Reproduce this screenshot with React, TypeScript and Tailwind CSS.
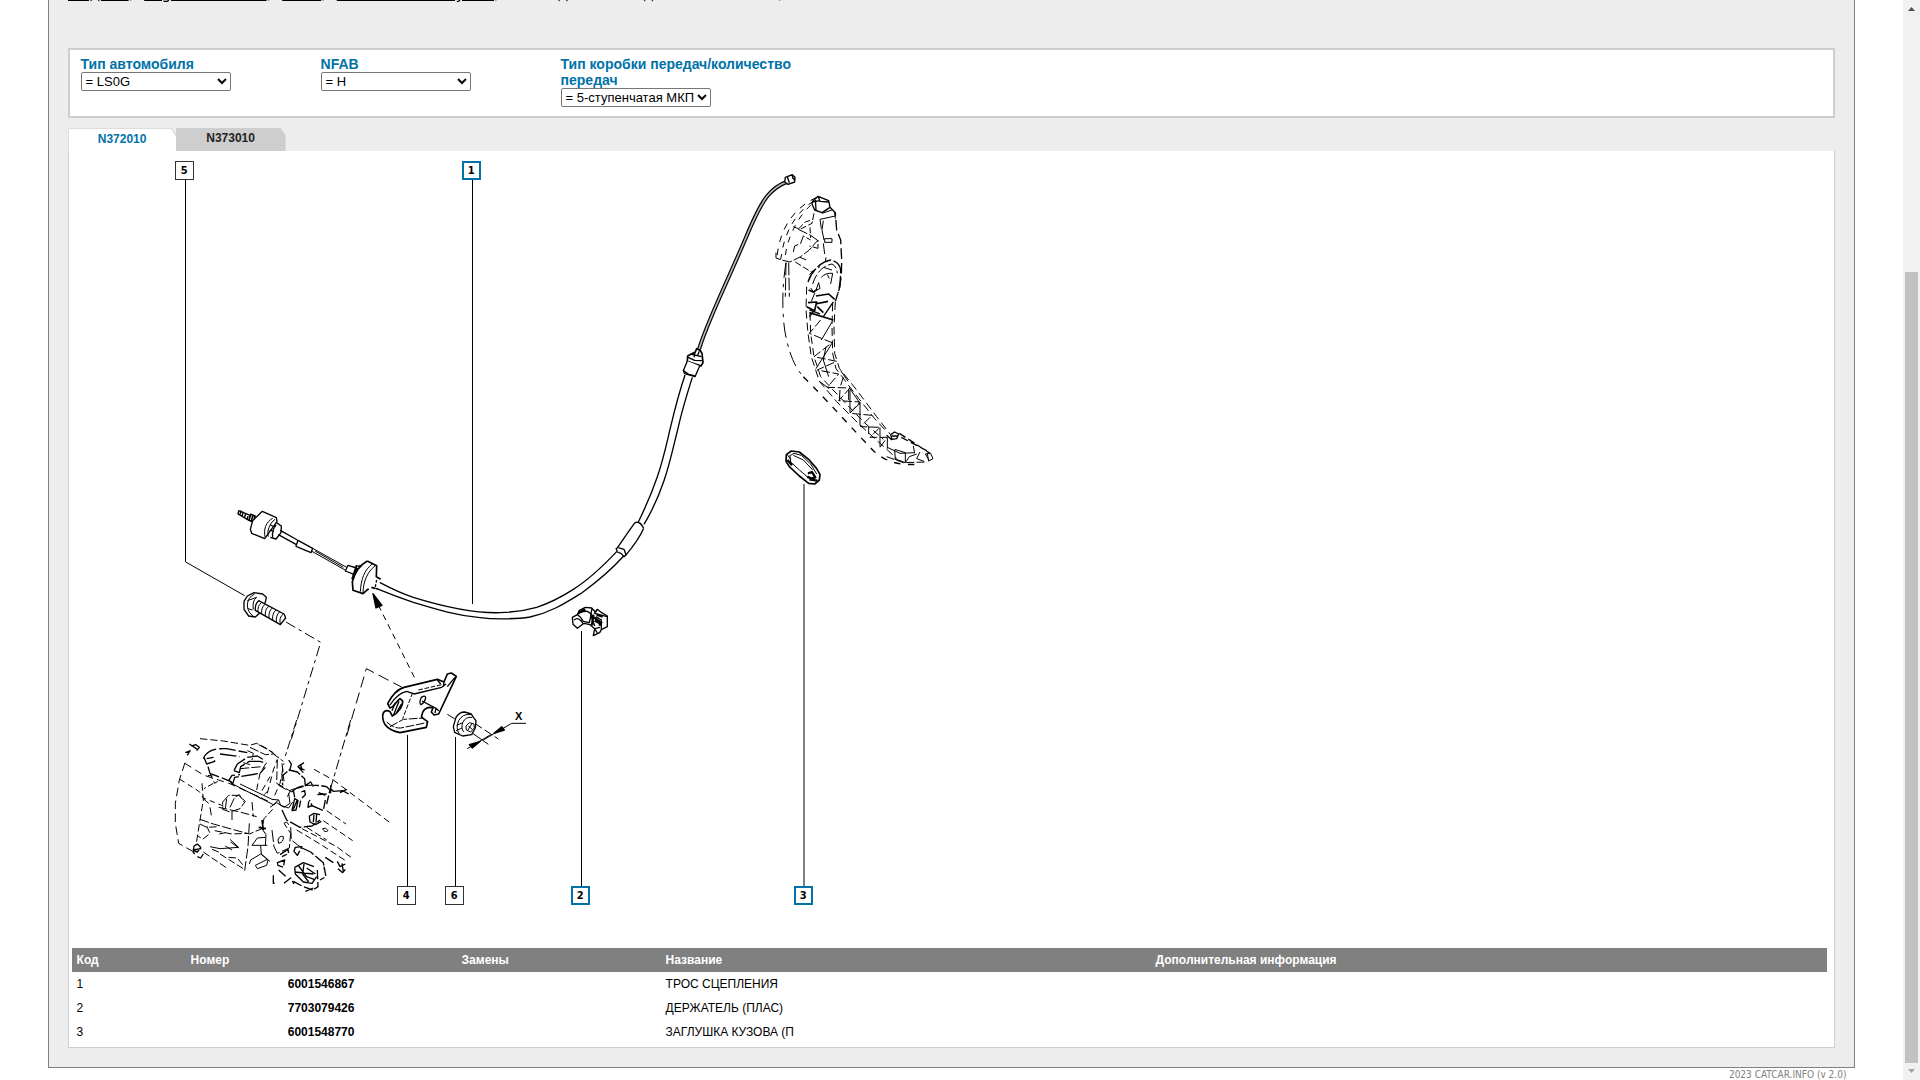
import { useState } from 'react';

const TRAIL = ['Модели', 'Logan - Sandero', 'LS0G', 'Механические узлы'];

const FILTERS = [
  { id: 'type', label: 'Тип автомобиля', value: '= LS0G' },
  { id: 'nfab', label: 'NFAB', value: '= H' },
  {
    id: 'gearbox',
    label: 'Тип коробки передач/количество передач',
    value: '= 5-ступенчатая МКП',
  },
];

const TABS = ['N372010', 'N373010'];

const PARTS = [
  { code: '1', number: '6001546867', name: 'ТРОС СЦЕПЛЕНИЯ' },
  { code: '2', number: '7703079426', name: 'ДЕРЖАТЕЛЬ (ПЛАС)' },
  { code: '3', number: '6001548770', name: 'ЗАГЛУШКА КУЗОВА (П' },
];

// Callouts sit on the diagram canvas, active ones are listed in the table
const CALLOUTS = [
  { n: '5', active: false, pos: 'left-[106px] top-[10px]' },
  { n: '1', active: true, pos: 'left-[393px] top-[10px]' },
  { n: '4', active: false, pos: 'left-[328px] top-[735px]' },
  { n: '6', active: false, pos: 'left-[376px] top-[735px]' },
  { n: '2', active: true, pos: 'left-[502px] top-[735px]' },
  { n: '3', active: true, pos: 'left-[725px] top-[735px]' },
];

function Cable() {
  return (
    <>
      {/* Upper half: thin cable, ferrule, sheath */}
      <g transform="translate(600 160) scale(0.33333)" strokeWidth="4">
        <path
          d="M297 568C310 525 340 455 362 405C400 320 420 275 440 228C460 180 480 135 502 108C520 87 540 73 560 66"
          strokeWidth="12"
        />
        <path
          d="M297 568C310 525 340 455 362 405C400 320 420 275 440 228C460 180 480 135 502 108C520 87 540 73 560 66"
          stroke="#bbb"
          strokeWidth="5"
        />
        <path d="M556 52L577 44L585 52L584 66L564 73L554 66ZM577 44L578 54L584 60M562 50L568 68" fill="#fff" />
        <path d="M274 582L286 576L290 566L300 571L306 580L309 608L303 618L274 612L262 603L263 588Z" fill="#fff" strokeWidth="5" />
        <path d="M264 592L284 601L309 602M272 582L304 590M285 578L282 592M298 574L292 588M264 604L300 616" />
        <path d="M262 603L250 632L254 641L285 650L299 618" fill="#fff" />
        <path d="M250 632L266 643L286 648" />
        <path d="M255 645C240 690 225 745 212 800C200 850 190 900 172 950C155 1000 135 1045 115 1086" />
        <path d="M277 652C260 705 245 755 234 805C220 860 210 910 192 962C174 1014 155 1055 132 1093" />
        <path d="M105 1088C85 1115 65 1145 50 1166M131 1105C118 1135 95 1165 77 1186M105 1088Q120 1082 131 1105" />
      </g>

      {/* Lower half of the sheath */}
      <g transform="translate(500 480) scale(0.33333)" strokeWidth="4">
        <path d="M348 204L352 216L364 221L372 230L378 224L372 208L355 203" />
        <path d="M350 215C300 268 265 300 220 328C175 357 140 372 110 382C75 392 40 397 0 398C-80 400 -170 380 -260 352C-310 335 -340 318 -367 304" />
        <path d="M371 228C335 268 290 306 245 339C190 373 150 398 90 411C50 418 -20 418 -60 413C-140 405 -200 385 -260 367C-310 350 -340 338 -372 325" />
      </g>

      {/* Adjuster end with rubber dampers */}
      <g transform="translate(160 480) scale(0.33333)" strokeWidth="4">
        <path d="M236 92L272 107M236 92L234 102L268 122M243 91L240 104M250 95L246 109M258 99L253 113M266 103L261 118" />
        <path d="M272 103L285 108L281 127L267 121ZM278 108L274 124" strokeWidth="5" />
        <path d="M307 94L349 113L351 125L314 176L275 160L271 148L278 122Z" fill="#fff" />
        <path d="M338 115C318 125 309 150 316 173M345 118C328 130 320 155 325 170" strokeWidth="3" />
        <path d="M348 127L364 138L363 158L348 177L331 172M348 135Q335 150 338 172M331 135L345 141M329 150L342 155" />
        <path d="M361 151L412 180M355 164L408 193M414 181L458 205L453 218L408 199Z" fill="#fff" />
        <path d="M458 205L560 262M456 214L555 270M465 213L550 262" strokeWidth="3" />
        <path d="M564 256L590 264L584 284L556 273Z" fill="#fff" />
        <path d="M592 258L606 260M588 266L602 268M583 276L596 278M577 286L590 290M575 294L590 298M590 255L576 298M601 255L586 300" strokeWidth="5" />
        <path d="M622 243L650 257L649 290L662 298L658 314L634 322L609 341L579 331L577 305C585 275 600 255 622 243Z" fill="#fff" stroke="none" />
        <path d="M622 243L650 257L649 290L662 298M626 326L609 341L579 331L577 305C585 275 600 255 622 243M634 322L645 325" strokeWidth="5" />
        <path d="M638 251C612 270 603 300 601 335M645 258C622 275 610 305 609 338" strokeWidth="3" />
        <path d="M650 300L645 325L658 328" strokeDasharray="8 5" />
      </g>
    </>
  );
}

function Fasteners() {
  return (
    <g transform="translate(160 480) scale(0.33333)" strokeWidth="4">
      {/* Bolt and its axis */}
      <path d="M77 246L254 347" strokeWidth="3" />
      <path d="M262 348L282 338L308 342L319 352L316 366L300 398L286 411L266 408L252 388V364Z" fill="#fff" />
      <path d="M284 342Q262 352 262 378Q264 398 280 408M262 362L290 352M264 386L278 390M290 352Q276 362 280 388" strokeWidth="3" />
      <path d="M296 362L372 402L377 414L361 434L286 391Q284 372 296 362Z" fill="#fff" />
      <path d="M304 368Q292 378 294 396M315 373Q303 383 305 402M326 379Q314 389 316 408M337 384Q325 394 327 414M348 390Q336 400 338 420M359 396Q347 406 349 426M370 402Q356 412 361 432" strokeWidth="3" />
      <path d="M378 426L482 487L394 778" strokeDasharray="32 12 10 12" strokeWidth="3" />

      {/* Assembly axis of the bracket */}
      <path d="M730 624L619 566L560 768" strokeDasharray="34 16" strokeWidth="3" />
      <path d="M763 592L650 365" strokeDasharray="18 14" strokeWidth="3" />
      <path d="M639 341L666 376L648 384Z" fill="#000" />
      <path d="M862 703L890 720M944 730L1015 777" strokeDasharray="26 10" strokeWidth="3" />

      {/* Bracket */}
      <path
        d="M683 671C696 645 712 628 732 622L832 598L852 606L862 582L874 579L889 589L836 702L822 705L814 696L819 684C800 678 786 690 785 712L803 725L799 742L720 758C690 752 668 736 668 708C668 694 678 688 690 695L697 708C713 700 729 680 728 663L720 656C708 664 702 682 690 684Z"
        fill="#fff"
        strokeWidth="5"
      />
      <path d="M690 675C706 650 720 638 740 634L762 642L845 622L858 612M852 606L850 620M862 620L885 592M832 600L842 612" />
      <path d="M758 638L728 716M775 630L845 614" strokeDasharray="14 5" strokeWidth="3" />
      <path d="M690 740L730 718L790 714M680 726Q702 746 722 744L800 728" strokeDasharray="26 5" strokeWidth="3" />
      <path d="M706 668L696 692M717 664L701 704M724 672L710 698" />
      <path d="M784 652Q795 645 797 652Q796 666 783 674Q776 670 784 652Z" strokeWidth="4" />
      <path d="M786 663L828 685L825 699M828 685L836 692" />

      {/* Nut */}
      <path d="M888 712Q898 696 914 696L934 702L940 712L948 722L946 744L935 764L908 768L884 757L880 740Z" fill="#fff" />
      <path d="M932 704Q908 700 896 722Q886 744 898 762M936 712Q916 710 908 728Q902 746 912 756M908 728L890 736M906 744L888 752" strokeWidth="3" />
      <path d="M928 728L942 732L943 744L932 756L919 750L918 738ZM925 738L937 748M935 732L924 750" strokeWidth="3" />

      {/* Dimension X */}
      <path d="M1098 730H1055L970 780M922 806L992 764M938 760L985 793" strokeWidth="3" />
      <path d="M1002 760L1025 740L1033 750ZM961 784L937 804L928 794Z" fill="#000" />
    </g>
  );
}

function Clip() {
  return (
    <g transform="translate(500 480) scale(0.33333)" strokeWidth="4">
      <path d="M217 412L232 404L238 391L256 382L275 384L286 396L292 388L305 398L322 408V440L304 449L299 458L280 467L284 446L270 434L252 430L232 445L219 433Z" fill="#fff" />
      <path d="M232 404Q244 392 262 394L274 402L268 428L250 424L240 410ZM222 420Q236 408 250 432" />
      <path d="M276 386L272 404L284 438M292 388L284 400L306 406L322 410M304 418V448M288 410L304 420M284 446L300 442M284 446L294 462" />
      <path d="M282 412L306 430M284 422L304 432M290 404L308 410M296 434H306M280 404L276 436M236 398L256 388" strokeWidth="7" />
    </g>
  );
}

function Pedal() {
  return (
    <g transform="translate(740 160) scale(0.33333)" strokeWidth="3">
      {/* Pivot bracket */}
      <path d="M218 124L234 109L266 122L270 142L246 158L224 150L216 132ZM234 109L240 124L266 126M226 116L228 150M216 126L240 122M248 156L262 148" strokeWidth="4" />
      <path d="M230 112C170 140 130 190 115 262L110 296" strokeDasharray="20 20" />
      <path d="M220 124C175 152 140 205 128 265L122 298" strokeDasharray="18 20" />
      <path d="M212 136C186 158 155 205 140 262L134 300" strokeDasharray="18 20" />
      <path d="M108 278V294L125 300L150 306L182 290L208 270L234 240V265L208 258M160 276L164 258L182 250L190 228L212 240M175 208L212 226L234 242" strokeDasharray="30 6" />
      <path d="M222 160L216 190L180 208L160 200M176 206L196 186L220 178M210 202L212 234" strokeDasharray="18 7" />
      <path d="M180 292L204 302M166 306L214 336L240 320M222 330L206 346" strokeDasharray="20 7" />
      <path d="M270 142L286 158L290 210L302 240L305 300L304 350L294 400" strokeDasharray="32 12" strokeWidth="4" />
      <path d="M284 156L286 176M240 178L244 206M250 182L246 210L252 240M240 178L286 168M246 160L276 150" />
      <path d="M254 236H276V247H254ZM250 250L254 282M258 292L256 306" />

      {/* Arm head */}
      <path d="M204 366C214 335 240 306 272 300Q300 306 302 332L300 380L286 424" strokeWidth="4" strokeDasharray="46 8" />
      <path d="M218 372C228 340 246 318 276 312Q290 318 292 340" strokeDasharray="30 8" />
      <path d="M244 352Q256 338 278 340L272 372M236 368L228 390L240 386ZM250 322L276 330M262 344L268 356M212 384L224 400L214 424" />
      <path d="M228 408L266 402L284 418M264 424L226 432M206 390L220 396L232 388M204 428L230 426L224 452L200 440M208 458L280 480M232 440L250 458" strokeWidth="5" />
      <path d="M280 426L250 470M208 450L240 462M220 455L208 470" strokeWidth="4" />

      {/* Arm edges */}
      <path d="M200 380L198 450L204 520L214 590L238 664L290 725L360 795L420 850L470 895" strokeDasharray="24 12" />
      <path d="M210 460L212 520L222 590L242 650L300 712L370 785L430 838" strokeDasharray="22 13" />
      <path d="M286 426L282 500L284 580L298 625L350 690L410 770L450 822" strokeDasharray="24 13" />
      <path d="M278 430L276 500L278 580L288 626L344 700L404 776L440 815" strokeDasharray="24 13" />

      {/* Ribs */}
      <path
        d="M242 480L208 520L276 548L222 590L290 604L232 630L296 642L262 682L330 684L296 722L360 726L330 760L396 766L362 800L420 802L390 832L442 832L420 862"
        strokeDasharray="26 8"
      />
      <path d="M276 486L244 540M276 550L228 626M258 560L250 600L266 650M326 686V720M300 690L298 722M330 686L360 730L330 758V690M360 726V796M386 800V822M420 802V860M442 866V834" />
      <path d="M238 664L268 686M302 632L324 664M310 652L302 676" />

      {/* Front contour */}
      <path d="M146 308L148 410M138 308L136 410" strokeDasharray="38 7" />
      <path d="M138 308C126 380 126 450 134 510C144 570 162 620 190 650" strokeDasharray="46 18 10 16" />
      <path d="M190 650C270 730 340 810 400 872C440 908 480 918 545 912" strokeDasharray="20 22" strokeWidth="4" />

      {/* Foot pad */}
      <path d="M452 824L464 816L476 822L470 836L456 838ZM456 828L474 828" strokeWidth="4" />
      <path d="M478 820L570 880M484 832L560 872M440 826L456 840" strokeDasharray="22 10" strokeWidth="4" />
      <path d="M464 868L496 878V908L464 896M442 862L480 880L524 878M496 908L508 890L530 882M466 900L464 870M520 858L524 880M540 876L530 896L552 904" />
      <path d="M556 882L568 902L579 896L572 880ZM562 880L566 904" />
      <path d="M440 890L490 908L560 906" strokeDasharray="24 7" />

      {/* Body plug */}
      <path d="M139 884L154 873L178 876L206 898L230 926L240 944L238 960L224 972L206 970L178 948L148 920L138 904Z" fill="#fff" strokeWidth="5" />
      <path d="M148 888L162 880L184 886L212 912L230 942M150 888L152 906L178 930L204 952M142 884L152 898M160 886L190 900L218 930" />
      <path d="M142 900L156 916M204 940L216 936L226 952L214 956L202 950M208 958L232 962" strokeWidth="7" />
    </g>
  );
}

function Gearbox() {
  return (
    <g transform="translate(160 720) scale(0.33333)" strokeWidth="3">
      {/* Casing outline */}
      <path d="M120 56L190 63L268 76L290 70L318 84L356 112" strokeDasharray="22 9" />
      <path d="M75 128L58 180L46 250V310L56 370L98 394" strokeDasharray="26 13" />
      <path d="M75 130L130 165L212 192L330 246" strokeDasharray="22 14" />
      <path d="M60 178L118 215L130 234L200 262" strokeDasharray="16 12" />
      <path d="M126 190L130 240L120 300L108 376" strokeDasharray="22 9" />
      <path d="M88 72L112 88M94 78L108 74L118 82L110 92M76 98L92 92M82 106L90 92" strokeWidth="4" />

      {/* Bell housing */}
      <path d="M130 116C140 90 170 84 200 86L262 98M132 112L140 132L164 124L160 112L140 116M144 140L150 160L206 182L216 166L240 164M180 102L240 110" strokeWidth="4" strokeDasharray="50 9" />
      <path d="M222 152L232 132L262 112L292 108L316 122M222 152L238 158L242 140L268 124L300 124L320 130M206 180L218 192L224 172L300 160L316 142" strokeWidth="4" strokeDasharray="50 8" />
      <path d="M262 92L280 100L276 120M270 82L316 104L340 102L370 124M250 128L270 134M240 146L306 140M296 74L340 98" strokeDasharray="28 6" />
      <path d="M214 190L340 254L356 240L336 238L240 192M212 182L220 196" />
      <path d="M290 210L300 160L318 130M322 220L340 150L352 118M344 226L360 190L372 130M306 212L330 170M290 226L302 236L322 214" strokeDasharray="20 12" />
      <path d="M150 160L164 190L180 180M160 190L132 206M144 166L158 168" strokeDasharray="18 8" />
      <path d="M188 246L206 226L236 226L256 244L240 266L210 276L188 268ZM200 236L196 266M210 262L224 232L238 224L252 246" strokeDasharray="30 6" />
      <path d="M130 236L146 250M150 262L154 286M176 262L240 276L290 290M216 276V300M276 246L280 290" strokeDasharray="26 8" />

      {/* Lower rows */}
      <path d="M120 298L160 312L210 326L268 342L306 326L312 296L338 268" strokeDasharray="28 7" />
      <path d="M120 312L140 322L176 320M164 332L216 342L262 340M178 342L196 338M140 318L150 340L128 358L114 348" strokeDasharray="22 8" />
      <path d="M150 380L180 386L236 382L210 358M156 388L176 396M196 378L216 390M212 366L236 384" />
      <path d="M102 378L112 372L122 382L112 396L100 392ZM98 390L124 386M98 394L104 402M112 410L122 414L130 402" strokeWidth="4" />
      <path d="M130 396L200 444M180 402L250 446M206 412L232 414L248 434" strokeDasharray="22 8" />
      <path d="M268 310L264 380L254 452" strokeDasharray="30 8" />
      <path d="M302 320L318 344L316 378M276 376H322M276 376L292 354L316 352M302 378L304 402L324 420L320 436L292 446L286 436L322 418M272 420L302 402M272 420L268 432M302 402L330 424" />
      <path d="M306 300L310 330M296 322L318 326" strokeWidth="5" />

      {/* Differential side */}
      <path d="M386 120L394 132L390 148L366 168L368 196M388 150L412 156L434 176L436 198L412 204" strokeWidth="4" strokeDasharray="36 5" />
      <path d="M432 128L414 140L430 158M422 134L426 150M416 142L434 150" strokeWidth="4" />
      <path d="M462 148L520 180L568 216L690 308" strokeDasharray="20 12" />
      <path d="M396 216C410 196 450 190 500 200L510 210L500 252M436 196L452 186L460 200M472 224L500 222M476 218L496 226" strokeWidth="4" strokeDasharray="40 7" />
      <path d="M382 230L392 210L412 204M386 220L390 250L372 262L350 248L330 262M356 240L362 256L386 264L398 246" />
      <path d="M404 236L414 242L408 270L396 272ZM412 240L400 268M424 216L434 212L436 224L426 234M422 242L418 262M400 210L404 232" strokeWidth="4" />
      <path d="M366 270L380 300L420 322L456 318L480 300M446 244L444 262L456 256L448 240M454 256L490 272L496 240" strokeWidth="4" strokeDasharray="38 7" />
      <path d="M448 288L462 280L480 284M484 304L466 314L450 306L448 288M462 284L460 306M470 284L468 308" strokeWidth="4" />
      <path d="M512 206L520 214L548 212L566 222M540 218L560 208M512 196V220" strokeWidth="4" />
      <path d="M500 272L558 312M490 302L578 362M426 326L530 380L576 414M440 322L500 360M410 330L480 372L560 424" strokeDasharray="20 10" />
      <path d="M488 326Q498 320 504 332Q494 340 488 326Z" />
      <path d="M410 0L376 108M572 0L512 204" strokeDasharray="30 10 12 10" />
      <path d="M352 120L350 190L396 216M366 130L372 184M356 196L384 212" strokeDasharray="26 8" />

      {/* Output flange */}
      <path d="M336 330L342 380L352 400L388 384L392 340L372 310L380 306L392 322L394 360L412 374L426 384" strokeDasharray="36 8" />
      <path d="M354 360Q358 346 370 350Q372 366 356 370Z" />
      <path d="M360 404L384 388L386 400L366 410M402 394L406 382L426 380L412 406ZM352 428L374 420L370 442L354 436ZM426 384L452 396L490 428L494 450" strokeWidth="4" strokeDasharray="40 7" />
      <path d="M404 442L430 428L462 440M470 470L456 490L430 486L406 462L404 442M416 438L440 470L462 478M432 432L428 462L446 486M404 456L460 462M440 444L466 462" strokeWidth="4" />
      <path d="M492 440L498 470L480 480M472 450L474 500L456 512M356 450L378 470M340 466V490L352 488M372 490L392 474L402 492M400 484L430 500L458 510M436 514L460 504" strokeWidth="4" strokeDasharray="28 8" />
      <path d="M532 424L540 440L556 432M534 446L548 458L556 448M496 412L520 428M546 430L550 454" strokeWidth="4" />
    </g>
  );
}

function Diagram() {
  return (
    <svg
      className="block"
      width="900"
      height="797"
      viewBox="69 151 900 797"
      fill="none"
      stroke="#000"
      strokeLinejoin="round"
      role="img"
      aria-label="N372010"
    >
      <Gearbox />
      <Cable />
      <Fasteners />
      <Clip />
      <Pedal />
      {/* Leaders */}
      <path d="M185.500 180V562M472.500 180V604M407.500 735V887M455.500 737V887M581.500 631V888" strokeWidth="1" />
      <path d="M804 484V888" stroke="#808080" strokeWidth="2" />
      <text x="515" y="720" fill="#000" stroke="none" fontSize="11" fontWeight="bold" fontFamily="Liberation Sans, sans-serif">
        X
      </text>
    </svg>
  );
}

function Scrollbar() {
  return (
    <div className="flex h-screen w-[17px] shrink-0 flex-col items-center bg-[#f1f1f1]" aria-hidden="true">
      <svg className="block shrink-0" width="17" height="17" viewBox="0 0 17 17">
        <path d="M5 11h7l-3.500-4z" fill="#505050" />
      </svg>
      <div className="flex-[255]" />
      <div className="w-[13px] flex-[791] bg-[#c1c1c1]" />
      <svg className="block shrink-0" width="17" height="17" viewBox="0 0 17 17">
        <path d="M5 6h7l-3.500 4z" fill="#a3a3a3" />
      </svg>
    </div>
  );
}

export default function App() {
  const [tab, setTab] = useState(TABS[0]);

  return (
    <div className="flex h-screen overflow-hidden bg-white font-['Liberation_Sans',Arial,sans-serif] text-[12px] text-black">
      <div className="min-w-0 flex-1">
        <main className="mx-auto w-[95%] border-x border-b border-[#808080] bg-[#ededed] px-[19px] pb-[19px]">
          {/* Scrolled almost out of view */}
          <nav className="-mt-4 mb-11 h-5 overflow-hidden whitespace-nowrap font-['DejaVu_Sans',sans-serif] text-[15px] leading-5">
            {TRAIL.map((item) => (
              <span key={item} className="mr-[6px]">
                <a href="#" className="underline">
                  {item}
                </a>
                <span className="text-[#808080]">, </span>
              </span>
            ))}
            <span>
              Накладка или ведомые элементы<span className="text-[#808080]">, </span>
            </span>
          </nav>

          <form className="flex border-2 border-[#cecece] bg-white px-[11px] pt-[6px] pb-[9px]">
            {FILTERS.map((f) => (
              <div key={f.id} className="w-[240px]">
                <label htmlFor={f.id} className="block text-[14px] leading-4 font-bold text-[#0072a8]">
                  {f.label}
                </label>
                <select
                  id={f.id}
                  className="block h-[19px] w-[150px] rounded-[2px] border border-[#767676] bg-white text-[13px]"
                >
                  <option>{f.value}</option>
                </select>
              </div>
            ))}
          </form>

          <div className="mt-[10px] flex" role="tablist">
            {TABS.map((t) => (
              <button
                key={t}
                type="button"
                role="tab"
                aria-selected={t === tab}
                onClick={() => setTab(t)}
                className={
                  t === tab
                    ? 'relative h-[23px] w-[108px] border-t border-l border-[#dcdcdc] bg-white pb-[3px] font-bold text-[#0072a8]'
                    : 'h-[23px] w-[110px] bg-[#cecece] pb-[3px] font-bold text-[#222] [clip-path:polygon(0_0,105px_0,110px_7px,110px_100%,0_100%)]'
                }
              >
                {t}
                {t === tab && (
                  <svg className="absolute -top-px right-0" width="6" height="9" viewBox="0 0 6 9">
                    <path d="M1 0H6V8Z" fill="#ededed" />
                    <path d="M1 0L6 8" stroke="#cecece" />
                  </svg>
                )}
              </button>
            ))}
          </div>

          <section className="border-x border-b border-[#cecece] bg-white pb-[3px]">
            <div className="relative">
              <Diagram />
              {CALLOUTS.map((c) => (
                <button
                  key={c.n}
                  type="button"
                  className={`absolute flex size-[19px] items-center justify-center bg-white font-['DejaVu_Sans_Condensed','DejaVu_Sans',sans-serif] text-[11px] leading-none font-bold ${c.pos} ${
                    c.active ? 'border-2 border-[#0072a8]' : 'border border-[#333]'
                  }`}
                >
                  {c.n}
                </button>
              ))}
            </div>

            <div className="pr-[7px] pl-[3px]">
              <table className="w-full table-fixed text-left">
                <thead className="bg-[#808080] text-white">
                  <tr className="h-6">
                    <th className="w-[114px] px-[5px]">Код</th>
                    <th className="w-[271px] px-[5px]">Номер</th>
                    <th className="w-[204px] px-[5px]">Замены</th>
                    <th className="w-[490px] px-[5px]">Название</th>
                    <th className="px-[5px]">Дополнительная информация</th>
                  </tr>
                </thead>
                <tbody>
                  {PARTS.map((p) => (
                    <tr key={p.code} className="h-6">
                      <td className="px-[5px]">{p.code}</td>
                      <td className="px-[5px] text-center font-bold">{p.number}</td>
                      <td className="px-[5px]" />
                      <td className="px-[5px]">{p.name}</td>
                      <td className="px-[5px]" />
                    </tr>
                  ))}
                </tbody>
              </table>
            </div>
          </section>
        </main>

        <footer className="mx-auto w-[95%] px-[9px] text-right font-['DejaVu_Sans_Condensed','DejaVu_Sans',sans-serif] text-[10px] leading-[14px] text-[#808080]">
          2023 CATCAR.INFO (v 2.0)
        </footer>
      </div>

      <Scrollbar />
    </div>
  );
}
